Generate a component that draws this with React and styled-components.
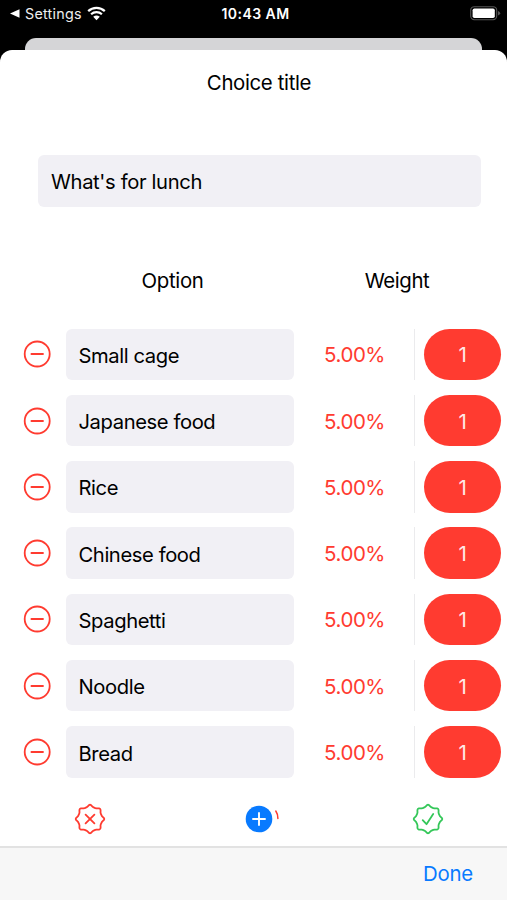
import { useState } from "react";
import styled, { createGlobalStyle } from "styled-components";

const colors = {
  red: "#ff3b30",
  blue: "#087aff",
  green: "#34c759",
  field: "#f1f0f5",
};

const initialOptions = [
  "Small cage",
  "Japanese food",
  "Rice",
  "Chinese food",
  "Spaghetti",
  "Noodle",
  "Bread",
];

// eight lobes with rounded tips
const sealPath = () => {
  const point = (angle, r) => {
    const rad = (angle * Math.PI) / 180;
    return `${(16 + r * Math.sin(rad)).toFixed(2)} ${(
      16 -
      r * Math.cos(rad)
    ).toFixed(2)}`;
  };
  let d = `M${point(-22.5, 12)}`;
  for (let i = 0; i < 8; i++) {
    const a = i * 45;
    d += `L${point(a - 14, 12.3)}L${point(a - 4, 14)}`;
    d += `Q${point(a, 14.6)} ${point(a + 4, 14)}`;
    d += `L${point(a + 14, 12.3)}L${point(a + 22.5, 12)}`;
  }
  return d + "Z";
};

const Seal = ({ color, children }) => (
  <Icon width="32" height="32" viewBox="0 0 32 32" stroke={color}>
    <path d={sealPath()} />
    {children}
  </Icon>
);

const App = () => {
  const [title, setTitle] = useState("What's for lunch");
  const [options, setOptions] = useState(initialOptions);

  const handleOptionChange = (index, value) => {
    setOptions(options.map((option, i) => (i === index ? value : option)));
  };

  return (
    <Screen>
      <GlobalStyle />
      <StatusBar>
        <BackToApp>
          <svg width="10" height="9" viewBox="0 0 10 9">
            <path d="M0 4.5 9.5 0.3V8.7Z" fill="#fff" />
          </svg>
          <span>Settings</span>
          <svg width="19" height="15" viewBox="0 0 19 15" fill="none">
            <path
              d="M1.2 5.1C5.8 0.7 13.2 0.7 17.8 5.1M4.1 8.2C7.1 5.3 11.9 5.3 14.9 8.2"
              stroke="#fff"
              strokeWidth="2.2"
            />
            <path d="M6.2 10.8Q9.5 8.3 12.8 10.8L9.5 14.2Z" fill="#fff" />
          </svg>
        </BackToApp>
        <Time>10:43 AM</Time>
        <svg width="31" height="15" viewBox="0 0 31 15">
          <rect
            x="0.7"
            y="0.7"
            width="26"
            height="13"
            rx="3.6"
            fill="none"
            stroke="#555"
            strokeWidth="1.1"
          />
          <rect x="2.6" y="2.4" width="22.2" height="9.6" rx="1.8" fill="#fff" />
          <path d="M28 5Q30.2 5.8 30.2 7.2T28 9.4Z" fill="#555" />
        </svg>
      </StatusBar>
      <BackCard />
      <Sheet>
        <Heading>Choice title</Heading>
        <TitleField
          aria-label="Choice title"
          value={title}
          onChange={(e) => setTitle(e.target.value)}
        />
        <Columns>
          <OptionLabel>Option</OptionLabel>
          <WeightLabel>Weight</WeightLabel>
        </Columns>
        <List>
          {options.map((option, index) => (
            <Row key={index}>
              <RemoveButton
                aria-label="Remove"
                onClick={() =>
                  setOptions(options.filter((_, i) => i !== index))
                }
              >
                <Icon width="28" height="28" viewBox="0 0 28 28" stroke={colors.red}>
                  <circle cx="14.2" cy="14" r="12.5" />
                  <path d="M8.4 14H20" />
                </Icon>
              </RemoveButton>
              <OptionField
                aria-label="Option"
                value={option}
                onChange={(e) => handleOptionChange(index, e.target.value)}
              />
              <Percent>5.00%</Percent>
              <Divider />
              <Weight>1</Weight>
            </Row>
          ))}
        </List>
        <Actions>
          <ActionButton aria-label="Cancel">
            <Seal color={colors.red}>
              <path d="M11.6 11.6 20.4 20.4M20.4 11.6 11.6 20.4" />
            </Seal>
          </ActionButton>
          <ActionButton
            aria-label="Add"
            onClick={() => setOptions([...options, ""])}
          >
            <Icon width="44" height="32" viewBox="0 0 44 32">
              <circle cx="22" cy="16" r="13.3" fill={colors.blue} />
              <path d="M22 10V22M16 16H28" stroke="#fff" strokeWidth="1.9" />
              <path
                d="M38.8 8Q40.9 11 40.9 15.5"
                stroke={colors.red}
                strokeWidth="1.5"
              />
            </Icon>
          </ActionButton>
          <ActionButton aria-label="Confirm">
            <Seal color={colors.green}>
              <path d="M10.7 17.2 14.5 21.2 21.2 11" />
            </Seal>
          </ActionButton>
        </Actions>
        <Toolbar>
          <DoneButton>Done</DoneButton>
        </Toolbar>
      </Sheet>
    </Screen>
  );
};

export default App;

const GlobalStyle = createGlobalStyle`
  * {
    box-sizing: border-box;
  }
  body {
    margin: 0;
    background: #000;
    font-family: Inter, sans-serif;
  }
  input,
  button {
    font-family: inherit;
    border: none;
    padding: 0;
    outline: none;
  }
  button {
    background: none;
  }
  svg {
    display: block;
    flex: none;
  }
`;

const Screen = styled.div`
  display: flex;
  flex-direction: column;
  width: 507px;
  height: 900px;
  overflow: hidden;
  background: #000;
`;

const StatusBar = styled.div`
  display: grid;
  grid-template-columns: 1fr auto 1fr;
  align-items: center;
  height: 38px;
  padding: 0 6px 11px 10px;
  flex: none;
  color: #fff;

  > svg {
    justify-self: end;
  }
`;

const BackToApp = styled.div`
  display: flex;
  align-items: center;
  gap: 5px;
  color: #eee;
  font-size: 14.3px;
  letter-spacing: 0.25px;
`;

const Time = styled.div`
  font-size: 14px;
  font-weight: 600;
  letter-spacing: 0.45px;
`;

const BackCard = styled.div`
  height: 12px;
  margin: 0 25px;
  flex: none;
  border-radius: 11px 11px 0 0;
  background: #d5d5d7;
`;

const Sheet = styled.div`
  display: flex;
  flex-direction: column;
  flex: 1;
  border-radius: 12px 12px 0 0;
  background: #fff;
  overflow: hidden;
`;

const Heading = styled.div`
  padding: 20px 0 0 11px;
  height: 105px;
  line-height: 26px;
  font-size: 20.4px;
  letter-spacing: -0.35px;
  text-align: center;
`;

const Field = styled.input`
  height: 51.5px;
  border-radius: 6px;
  background: ${colors.field};
  color: #000;
  font-size: 20.2px;
  letter-spacing: -0.4px;
`;

const TitleField = styled(Field)`
  width: 442.5px;
  margin-left: 38px;
  padding: 2px 13px 0;
  letter-spacing: -0.35px;
`;

const Columns = styled.div`
  display: flex;
  height: 122px;
  padding-top: 61px;
  line-height: 26px;
  font-size: 20.4px;
`;

const OptionLabel = styled.div`
  width: 345px;
  text-align: center;
  letter-spacing: -0.3px;
`;

const WeightLabel = styled.div`
  width: 104px;
  text-align: center;
  letter-spacing: -0.4px;
`;

const List = styled.div`
  display: flex;
  flex-direction: column;
  gap: 14.8px;
`;

const Row = styled.div`
  display: grid;
  grid-template-columns: 43px 228px 120.3px 10.2px 76.3px;
  align-items: center;
  height: 51.5px;
  padding-left: 23px;
`;

const Icon = styled.svg`
  fill: none;
  stroke-width: 1.8;
  stroke-linecap: round;
  stroke-linejoin: round;
`;

const RemoveButton = styled.button`
  width: 28px;
  height: 28px;
`;

const OptionField = styled(Field)`
  width: 100%;
  padding: 2px 12.5px 0;
`;

const Percent = styled.div`
  padding: 1px 0 0 30px;
  color: ${colors.red};
  font-size: 20.5px;
  font-weight: 400;
  letter-spacing: -0.45px;
`;

const Divider = styled.div`
  width: 1px;
  height: 51.5px;
  background: #ebebed;
`;

const Weight = styled.div`
  display: flex;
  align-items: center;
  justify-content: center;
  height: 51.5px;
  padding-top: 1px;
  border-radius: 26px;
  background: ${colors.red};
  color: #ffe9e7;
  font-size: 20.5px;
  font-weight: 400;
`;

const Actions = styled.div`
  display: grid;
  grid-template-columns: 180px 158px 180px;
  justify-items: center;
  align-items: center;
  height: 68px;
  padding-top: 14px;
  flex: none;
`;

const ActionButton = styled.button`
  height: 32px;
`;

const Toolbar = styled.div`
  display: flex;
  align-items: center;
  justify-content: flex-end;
  flex: 1;
  padding: 0 34px 1px 0;
  border-top: 2px solid #e2e2e2;
  background: #f7f7f7;
`;

const DoneButton = styled.button`
  color: ${colors.blue};
  font-size: 20.4px;
  letter-spacing: -0.2px;
`;
